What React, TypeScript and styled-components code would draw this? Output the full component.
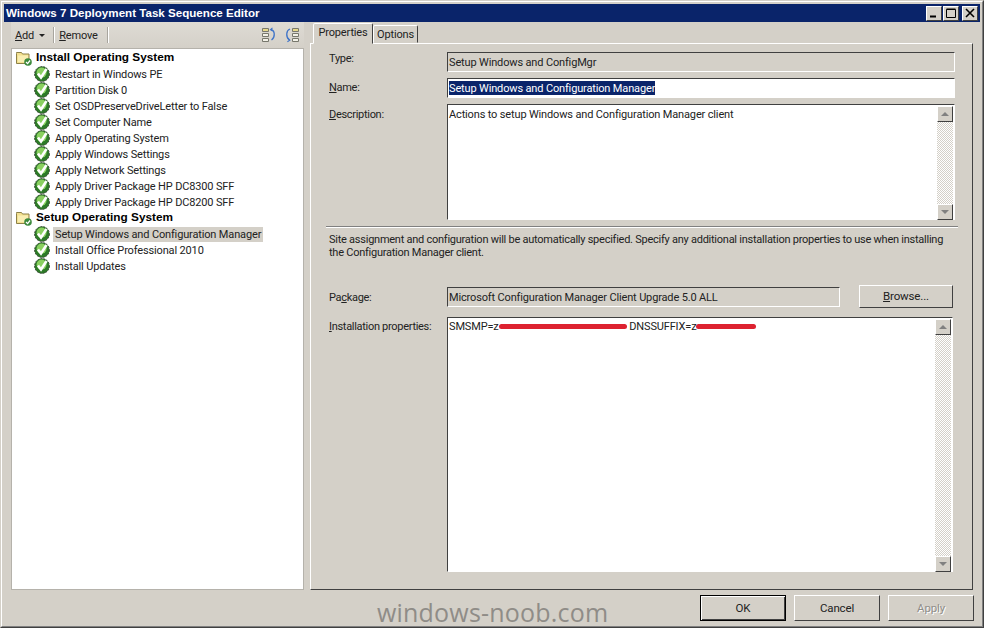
import React from 'react';
import styled, { createGlobalStyle } from 'styled-components';

const GlobalStyle = createGlobalStyle`
  html, body {
    margin: 0;
    padding: 0;
    background: #d4d0c8;
  }
  * {
    box-sizing: border-box;
  }
`;

const Window = styled.div`
  position: relative;
  width: 984px;
  height: 628px;
  overflow: hidden;
  background: #d4d0c8;
  border: 1px solid;
  border-color: #d4d0c8 #404040 #404040 #d4d0c8;
  font-family: Roboto, 'Liberation Sans', Arial, sans-serif;
  font-size: 11px;
  line-height: 13px;
  letter-spacing: -0.15px;
  color: #222222;
`;

const Frame = styled.div`
  display: flex;
  flex-direction: column;
  height: 100%;
  padding: 2px;
  border: 1px solid;
  border-color: #ffffff #808080 #808080 #ffffff;
`;

const TitleBar = styled.div`
  display: flex;
  align-items: center;
  justify-content: space-between;
  flex: 0 0 18px;
  padding: 0 2px;
  background: #0a246a;
`;

const TitleText = styled.span`
  margin-top: -2px;
  color: #ffffff;
  font-family: 'Liberation Sans', Arial, sans-serif;
  font-weight: 700;
  font-size: 11.6px;
  letter-spacing: 0;
`;

const Caption = styled.div`
  display: flex;
  gap: 1px;
`;

const CaptionButton = styled.div`
  display: flex;
  align-items: center;
  justify-content: center;
  width: 16px;
  height: 15px;
  background: #d4d0c8;
  border: 1px solid;
  border-color: #ffffff #404040 #404040 #ffffff;

  &:last-child {
    margin-left: 2px;
  }
`;

const Body = styled.div`
  display: flex;
  flex: 0 0 568px;
  gap: 6px;
  padding-left: 7px;
`;

const LeftColumn = styled.div`
  display: flex;
  flex-direction: column;
  width: 293px;
`;

const Toolbar = styled.div`
  display: flex;
  align-items: center;
  flex: 0 0 26px;
  padding: 0 4px;
  background: linear-gradient(#dedbd4, #d4d0c8);
`;

const ToolText = styled.span<{ $gap: number }>`
  padding-right: ${({ $gap }) => $gap}px;
  font-size: 11px;
`;

const ToolArrow = styled.span`
  width: 0;
  height: 0;
  margin: 1px 8px 0 5px;
  border-left: 3px solid transparent;
  border-right: 3px solid transparent;
  border-top: 3px solid #222222;
`;

const ToolDivider = styled.span`
  width: 2px;
  height: 16px;
  margin-right: 4px;
  border-left: 1px solid #a8a59e;
  border-right: 1px solid #ffffff;
`;

const ToolIcons = styled.div`
  display: flex;
  gap: 7px;
  margin-left: auto;
`;

const Tree = styled.div`
  flex: 1;
  padding: 1px 0 0 4px;
  background: #ffffff;
  border: 1px solid;
  border-color: #404040 #ffffff #ffffff #404040;
  outline: 1px solid #b5b2ab;
  outline-offset: -1px;
`;

const GroupRow = styled.div`
  display: flex;
  align-items: center;
  gap: 4px;
  height: 16px;
  color: #000000;
  font-family: 'Liberation Sans', Arial, sans-serif;
  font-weight: 700;
  font-size: 11.8px;
  letter-spacing: 0;
`;

const GroupText = styled.span`
  margin-top: -2px;
`;

const StepRow = styled.div`
  display: flex;
  align-items: center;
  gap: 3px;
  height: 16px;
  padding-left: 18px;
`;

const StepText = styled.span<{ $selected?: boolean }>`
  padding: 1px 2px;
  background: ${({ $selected }) => ($selected ? '#d4d0c8' : 'transparent')};
`;

const RightColumn = styled.div`
  display: flex;
  flex-direction: column;
  width: 663px;
`;

const Tabs = styled.div`
  display: flex;
  align-items: flex-end;
  flex: 0 0 21px;
  padding-left: 3px;
`;

const Tab = styled.div<{ $active?: boolean }>`
  position: relative;
  display: flex;
  align-items: center;
  justify-content: center;
  width: ${({ $active }) => ($active ? 60 : 45)}px;
  height: ${({ $active }) => ($active ? 21 : 18)}px;
  margin-bottom: ${({ $active }) => ($active ? -1 : 0)}px;
  padding-bottom: ${({ $active }) => ($active ? 3 : 0)}px;
  background: #d4d0c8;
  border: 1px solid;
  border-color: #ffffff #404040 transparent #ffffff;
  border-radius: 2px 2px 0 0;
`;

const Panel = styled.div`
  flex: 1;
  padding: 8px 17px 0 18px;
  border: 1px solid;
  border-color: #ffffff #404040 #404040 #ffffff;
`;

const FormRow = styled.div<{ $mt?: number }>`
  display: flex;
  align-items: flex-start;
  margin-top: ${({ $mt }) => $mt ?? 0}px;
`;

const Label = styled.div<{ $top?: number }>`
  flex: 0 0 118px;
  padding-top: ${({ $top }) => $top ?? 0}px;
  letter-spacing: -0.3px;
`;

const Field = styled.div<{ $width: number; $height?: number; $white?: boolean; $mt?: number }>`
  display: flex;
  width: ${({ $width }) => $width}px;
  height: ${({ $height }) => $height ?? 20}px;
  margin-top: ${({ $mt }) => $mt ?? 0}px;
  padding: 2px 1px 0 1px;
  background: ${({ $white }) => ($white ? '#ffffff' : '#d4d0c8')};
  border: 1px solid;
  border-color: #404040 #ffffff #ffffff #404040;
  white-space: nowrap;
`;

const FieldText = styled.div<{ $top?: number }>`
  flex: 1;
  padding-top: ${({ $top }) => $top ?? 1}px;
`;

const Selected = styled.span`
  display: inline-block;
  height: 14px;
  margin-top: -1px;
  padding-top: 1px;
  color: #ffffff;
  background: #0a246a;
`;

const Redaction = styled.span<{ $width: number }>`
  display: inline-block;
  width: ${({ $width }) => $width}px;
  height: 5px;
  vertical-align: 1px;
  border-radius: 3px;
  background: #dd2230;
`;

const Separator = styled.div`
  height: 2px;
  margin: 6px -3px 0 -3px;
  border-top: 1px solid #808080;
  border-bottom: 1px solid #ffffff;
`;

const Note = styled.div`
  width: 622px;
  height: 26px;
  margin-top: 5px;
  letter-spacing: -0.25px;
`;

const Scrollbar = styled.div`
  display: flex;
  flex-direction: column;
  flex: 0 0 16px;
  margin-top: -1px;
  margin-bottom: -1px;
  background-color: #ffffff;
  background-image: conic-gradient(#d4d0c8 25%, transparent 0 50%, #d4d0c8 0 75%, transparent 0);
  background-size: 2px 2px;
`;

const ScrollButton = styled.div<{ $down?: boolean }>`
  display: flex;
  align-items: center;
  justify-content: center;
  flex: 0 0 16px;
  margin-top: ${({ $down }) => ($down ? 'auto' : '0')};
  background: #d4d0c8;
  border: 1px solid;
  border-color: #ffffff #404040 #404040 #ffffff;
`;

const ScrollArrow = styled.span<{ $down?: boolean }>`
  width: 0;
  height: 0;
  border-left: 4px solid transparent;
  border-right: 4px solid transparent;
  border-top: ${({ $down }) => ($down ? '4px solid #808080' : 'none')};
  border-bottom: ${({ $down }) => ($down ? 'none' : '4px solid #808080')};
`;

const PushButton = styled.div<{ $default?: boolean; $disabled?: boolean }>`
  display: flex;
  align-items: center;
  justify-content: center;
  flex: 0 0 86px;
  height: 26px;
  font-size: 11.5px;
  color: ${({ $disabled }) => ($disabled ? '#8f8d88' : '#222222')};
  text-shadow: ${({ $disabled }) => ($disabled ? '1px 1px 0 #ffffff' : 'none')};
  background: #d4d0c8;
  border: 1px solid;
  border-color: ${({ $default }) => ($default ? '#000000' : '#ffffff #404040 #404040 #ffffff')};
  box-shadow: ${({ $default }) => ($default ? 'inset 1px 1px 0 #ffffff, inset -1px -1px 0 #404040' : 'none')};
`;

const BrowseButton = styled(PushButton)`
  flex: 0 0 94px;
  height: 23px;
  margin-left: 19px;
`;

const Footer = styled.div`
  display: flex;
  justify-content: flex-end;
  gap: 8px;
  padding: 5px 6px 0 0;
`;

const Watermark = styled.div`
  position: absolute;
  left: 376px;
  top: 597px;
  color: #8f8c87;
  font-family: 'Open Sans', sans-serif;
  font-size: 25px;
  line-height: 28px;
  letter-spacing: 0.2px;
`;

const StepIcon = () => (
  <svg width="16" height="16" viewBox="0 0 16 16">
    <circle cx="8" cy="8" r="7.4" fill="#2c7a27" stroke="#3c4a38" strokeWidth="1" strokeDasharray="2 1" />
    <circle cx="7.6" cy="6.6" r="5" fill="#8ad060" />
    <path d="M4 7.5l3 4L12.5 3" fill="none" stroke="#ffffff" strokeWidth="2.6" />
  </svg>
);

const FolderIcon = () => (
  <svg width="16" height="16" viewBox="0 0 16 16">
    <path d="M0.5 3.5V2.5h5l1 1.5h6.5v9.5H0.5z" fill="#f3e08f" stroke="#8d8148" />
    <path d="M2 5.5h10V12H2z" fill="#f9eeb2" />
    <circle cx="12" cy="12" r="3.8" fill="#3c8a3c" />
    <path d="M10 12l1.6 1.6L14 10.5" fill="none" stroke="#ffffff" strokeWidth="1.3" />
  </svg>
);

const CollapseIcon = () => (
  <svg width="16" height="16" viewBox="0 0 16 16">
    <path d="M1.5 1.5h6v3h-6z" fill="#e8d98a" stroke="#77776c" />
    <path d="M1.5 6.5h6v3h-6zM1.5 11.5h6v3h-6z" fill="#f2f0e6" stroke="#77776c" />
    <path d="M10 2.5c4 1 4.5 7.5 0.5 10.5" fill="none" stroke="#3f74c8" strokeWidth="1.3" />
    <path d="M11.5 0.8L9.5 2.6l2.2 1.4" fill="none" stroke="#3f74c8" strokeWidth="1.1" />
  </svg>
);

const ExpandIcon = () => (
  <svg width="16" height="16" viewBox="0 0 16 16">
    <path d="M8.5 1.5h6v3h-6z" fill="#e8d98a" stroke="#77776c" />
    <path d="M8.5 6.5h6v3h-6zM8.5 11.5h6v3h-6z" fill="#f2f0e6" stroke="#77776c" />
    <path d="M6 2C2 3.5 1.5 10 5.5 13" fill="none" stroke="#3f74c8" strokeWidth="1.3" />
    <path d="M3.6 11.2l2.2 2-2.4 1.6" fill="none" stroke="#3f74c8" strokeWidth="1.1" />
  </svg>
);

const WindowScrollbar = () => (
  <Scrollbar>
    <ScrollButton>
      <ScrollArrow />
    </ScrollButton>
    <ScrollButton $down>
      <ScrollArrow $down />
    </ScrollButton>
  </Scrollbar>
);

const installSteps = [
  'Restart in Windows PE',
  'Partition Disk 0',
  'Set OSDPreserveDriveLetter to False',
  'Set Computer Name',
  'Apply Operating System',
  'Apply Windows Settings',
  'Apply Network Settings',
  'Apply Driver Package HP DC8300 SFF',
  'Apply Driver Package HP DC8200 SFF',
];

const setupSteps = [
  'Setup Windows and Configuration Manager',
  'Install Office Professional 2010',
  'Install Updates',
];

export default function App() {
  return (
    <>
      <GlobalStyle />
      <Window>
        <Frame>
          <TitleBar>
            <TitleText>Windows 7 Deployment Task Sequence Editor</TitleText>
            <Caption>
              <CaptionButton>
                <svg width="10" height="10" viewBox="0 0 10 10"><path d="M1 7.5h6v2H1z" fill="#000" /></svg>
              </CaptionButton>
              <CaptionButton>
                <svg width="10" height="10" viewBox="0 0 10 10"><path d="M0.5 1.5h9v8h-9zM0.5 1h9" fill="none" stroke="#000" /></svg>
              </CaptionButton>
              <CaptionButton>
                <svg width="10" height="10" viewBox="0 0 10 10"><path d="M1 1l8 8M9 1l-8 8" fill="none" stroke="#000" strokeWidth="1.6" /></svg>
              </CaptionButton>
            </Caption>
          </TitleBar>

          <Body>
            <LeftColumn>
              <Toolbar>
                <ToolText $gap={0}><u>A</u>dd</ToolText>
                <ToolArrow />
                <ToolDivider />
                <ToolText $gap={9}><u>R</u>emove</ToolText>
                <ToolDivider />
                <ToolIcons>
                  <CollapseIcon />
                  <ExpandIcon />
                </ToolIcons>
              </Toolbar>
              <Tree>
                <GroupRow><FolderIcon /><GroupText>Install Operating System</GroupText></GroupRow>
                {installSteps.map((step) => (
                  <StepRow key={step}><StepIcon /><StepText>{step}</StepText></StepRow>
                ))}
                <GroupRow><FolderIcon /><GroupText>Setup Operating System</GroupText></GroupRow>
                {setupSteps.map((step, index) => (
                  <StepRow key={step}><StepIcon /><StepText $selected={index === 0}>{step}</StepText></StepRow>
                ))}
              </Tree>
            </LeftColumn>

            <RightColumn>
              <Tabs>
                <Tab $active>Properties</Tab>
                <Tab>Options</Tab>
              </Tabs>
              <Panel>
                <FormRow>
                  <Label>Type:</Label>
                  <Field $width={508}><FieldText>Setup Windows and ConfigMgr</FieldText></Field>
                </FormRow>
                <FormRow $mt={6}>
                  <Label $top={3}><u>N</u>ame:</Label>
                  <Field $width={508} $white><FieldText><Selected>Setup Windows and Configuration Manager</Selected></FieldText></Field>
                </FormRow>
                <FormRow $mt={6}>
                  <Label $top={4}><u>D</u>escription:</Label>
                  <Field $width={508} $height={116} $white>
                    <FieldText>Actions to setup Windows and Configuration Manager client</FieldText>
                    <WindowScrollbar />
                  </Field>
                </FormRow>
                <Separator />
                <Note>
                  Site assignment and configuration will be automatically specified. Specify any additional installation properties to use when installing
                  the Configuration Manager client.
                </Note>
                <FormRow $mt={26}>
                  <Label $top={6}>Pa<u>c</u>kage:</Label>
                  <Field $width={393} $mt={2}><FieldText>Microsoft Configuration Manager Client Upgrade 5.0 ALL</FieldText></Field>
                  <BrowseButton><span><u>B</u>rowse...</span></BrowseButton>
                </FormRow>
                <FormRow $mt={9}>
                  <Label $top={3}><u>I</u>nstallation properties:</Label>
                  <Field $width={506} $height={255} $white>
                    <FieldText $top={0}>
                      SMSMP=z<Redaction $width={128} /> DNSSUFFIX=z<Redaction $width={60} />
                    </FieldText>
                    <WindowScrollbar />
                  </Field>
                </FormRow>
              </Panel>
            </RightColumn>
          </Body>

          <Footer>
            <PushButton $default>OK</PushButton>
            <PushButton>Cancel</PushButton>
            <PushButton $disabled>Apply</PushButton>
          </Footer>
        </Frame>
        <Watermark>windows-noob.com</Watermark>
      </Window>
    </>
  );
}
